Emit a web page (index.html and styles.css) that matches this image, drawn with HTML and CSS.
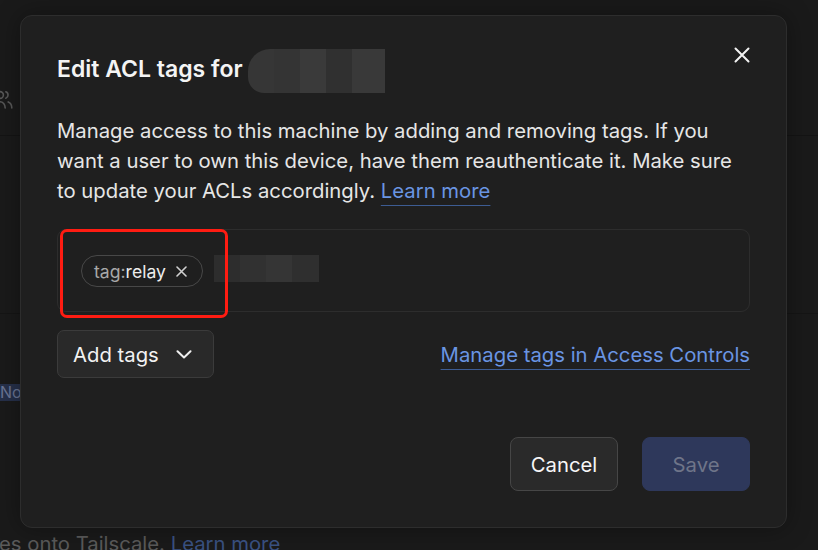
FILE: index.html
```html
<!DOCTYPE html>
<html lang="en">
<head>
<meta charset="utf-8">
<title>Edit ACL tags</title>
<link rel="stylesheet" href="styles.css">
</head>
<body>
<div class="page">
  <div class="page-row page-row-top">
    <svg class="users-icon" width="20" height="20" viewBox="0 0 20 20" fill="none" stroke="#585858" stroke-width="1.6" stroke-linecap="round">
      <circle cx="6" cy="5" r="3.4"/>
      <path d="M0.8 18c0-3.6 2.3-6.2 5.2-6.2s5.2 2.6 5.2 6.2"/>
      <path d="M11.8 1.8a3.4 3.4 0 0 1 0 6.4"/>
      <path d="M14.2 11.9c2.2 0.8 3.6 3 3.6 6.1"/>
    </svg>
  </div>
  <div class="page-row page-row-mid"></div>
  <div class="page-badge">No</div>
  <p class="page-text">es onto Tailscale. <span class="page-link">Learn more</span></p>
</div>

<div class="modal">
  <div class="modal-header">
    <h2 class="modal-title">Edit ACL tags for</h2>
    <div class="redact redact-title">
      <span style="background:#363636"></span><span style="background:#343434"></span><span style="background:#3a3a3a"></span><span style="background:#303030"></span><span style="background:#393939"></span>
    </div>
  </div>
  <button class="close-btn" aria-label="Close">
    <svg width="16" height="16" viewBox="0 0 16 16" fill="none" stroke="#f2f2f2" stroke-width="2" stroke-linecap="round"><path d="M1.5 1.5l13 13M14.5 1.5l-13 13"/></svg>
  </button>

  <p class="modal-desc">Manage access to this machine by adding and removing tags. If you want a user to own this device, have them reauthenticate it. Make sure to update your ACLs accordingly. <a class="link">Learn more</a></p>

  <div class="tag-input">
    <span class="chip"><span class="chip-text"><span class="chip-prefix">tag:</span>relay</span>
      <svg width="11" height="11" viewBox="0 0 11 11" fill="none" stroke="#d0d0d0" stroke-width="1.6" stroke-linecap="round"><path d="M1 1l9 9M10 1l-9 9"/></svg>
    </span>
    <div class="redact redact-tag">
      <span style="background:#2d2d2d"></span><span style="background:#313131"></span><span style="background:#353535"></span><span style="background:#2f2f2f"></span>
    </div>
    <div class="annotation"></div>
  </div>

  <div class="tag-actions">
    <button class="btn btn-add">Add tags
      <svg width="16" height="9" viewBox="0 0 16 9" fill="none" stroke="#f0f0f0" stroke-width="2" stroke-linecap="round" stroke-linejoin="round"><path d="M1.5 1.2l6.5 6.3 6.5-6.3"/></svg>
    </button>
    <a class="link link-manage">Manage tags in Access Controls</a>
  </div>

  <div class="modal-footer">
    <button class="btn btn-cancel">Cancel</button>
    <button class="btn btn-save">Save</button>
  </div>
</div>
</body>
</html>
```

FILE: styles.css
```css
* { box-sizing: border-box; }
html, body {
  margin: 0;
  padding: 0;
}
body {
  width: 818px;
  height: 550px;
  overflow: hidden;
  background: #1a1a1a;
  font-family: Inter, "Noto Sans", "Liberation Sans", sans-serif;
  color: #ececec;
  position: relative;
}

/* underlying page (dimmed) */
.page {
  display: flex;
  flex-direction: column;
  height: 550px;
  overflow: hidden;
}
.page > * { flex-shrink: 0; }
.page-row-top {
  height: 136px;
  border-bottom: 1px solid #141414;
  display: flex;
  align-items: flex-end;
  padding-bottom: 25px;
}
.users-icon {
  margin-left: -6px;
}
.page-row-mid {
  height: 178px;
  border-bottom: 1px solid #151515;
}
.page-badge {
  margin-top: 70px;
  width: 40px;
  height: 17px;
  background: #26304a;
  color: #6a7594;
  font-size: 16px;
  line-height: 17px;
}
.page-text {
  margin: 131px 0 0 -1px;
  font-size: 20.3px;
  line-height: 24px;
  color: #5a5a5a;
  white-space: nowrap;
}
.page-link { color: #3a5283; }

/* modal */
.modal {
  position: absolute;
  left: 20px;
  top: 15px;
  width: 767px;
  height: 513px;
  background: #1f1f1f;
  border: 1px solid #2d2d2d;
  border-radius: 12px;
  padding: 36px;
  display: flex;
  flex-direction: column;
  box-shadow: 0 0 24px rgba(0,0,0,0.35);
}
.modal-header {
  display: flex;
  align-items: flex-start;
  height: 44px;
  margin-top: -3px;
}
.modal-title {
  margin: 5px 0 0;
  font-size: 23px;
  font-weight: 600;
  line-height: 30px;
  color: #f4f4f4;
}
.redact {
  display: flex;
  overflow: hidden;
}
.redact span { display: block; width: 26px; height: 100%; }
.redact span:last-child { flex: 1; }
.redact-title {
  margin-left: 5px;
  width: 137px;
  height: 44px;
  border-radius: 22px 0 0 16px;
}
.close-btn {
  position: absolute;
  top: 31px;
  right: 36px;
  width: 16px;
  height: 16px;
  padding: 0;
  border: 0;
  background: none;
  display: flex;
}

.modal-desc {
  margin: 23px 0 0;
  font-size: 20.3px;
  line-height: 30px;
  color: #e6e6e6;
}
.link {
  color: #6a95e3;
  text-decoration: underline;
  text-decoration-color: #3d5c93;
  text-decoration-thickness: 1px;
  text-underline-offset: 7px;
}

.tag-input {
  position: relative;
  margin-top: 23px;
  height: 83px;
  border: 1px solid #2d2d2d;
  border-radius: 9px;
  display: flex;
  align-items: center;
  padding: 0 23px;
  gap: 11px;
}
.chip {
  display: inline-flex;
  align-items: center;
  gap: 10px;
  height: 32px;
  padding: 0 15px 0 12px;
  border: 1px solid #484848;
  border-radius: 16px;
  font-size: 17.6px;
  color: #ededed;
  margin-top: 1px;
}
.chip-prefix { color: #a8a8a8; }
.redact-tag {
  width: 105px;
  height: 27px;
  margin-top: -5px;
}
.annotation {
  position: absolute;
  left: 2px;
  top: -1px;
  width: 168px;
  height: 89px;
  border: 3px solid #ff1c12;
  border-radius: 7px;
}

.tag-actions {
  margin-top: 18px;
  display: flex;
  align-items: center;
  justify-content: space-between;
}
.btn {
  font-family: inherit;
  font-size: 20.3px;
  border-radius: 8px;
  cursor: pointer;
}
.btn-add {
  height: 48px;
  width: 157px;
  display: flex;
  align-items: center;
  justify-content: space-between;
  padding: 0 21px 0 15px;
  background: #292929;
  border: 1px solid #3b3b3b;
  color: #f2f2f2;
  border-radius: 7px;
}
.link-manage {
  font-size: 20.3px;
}

.modal-footer {
  margin-top: auto;
  display: flex;
  justify-content: flex-end;
  gap: 24px;
}
.btn-cancel {
  width: 108px;
  height: 54px;
  background: #2a2a2a;
  border: 1px solid #464646;
  color: #f7f7f7;
}
.btn-save {
  width: 108px;
  height: 54px;
  background: #2e385b;
  border: 1px solid #2e385b;
  color: #6f7589;
}
```
